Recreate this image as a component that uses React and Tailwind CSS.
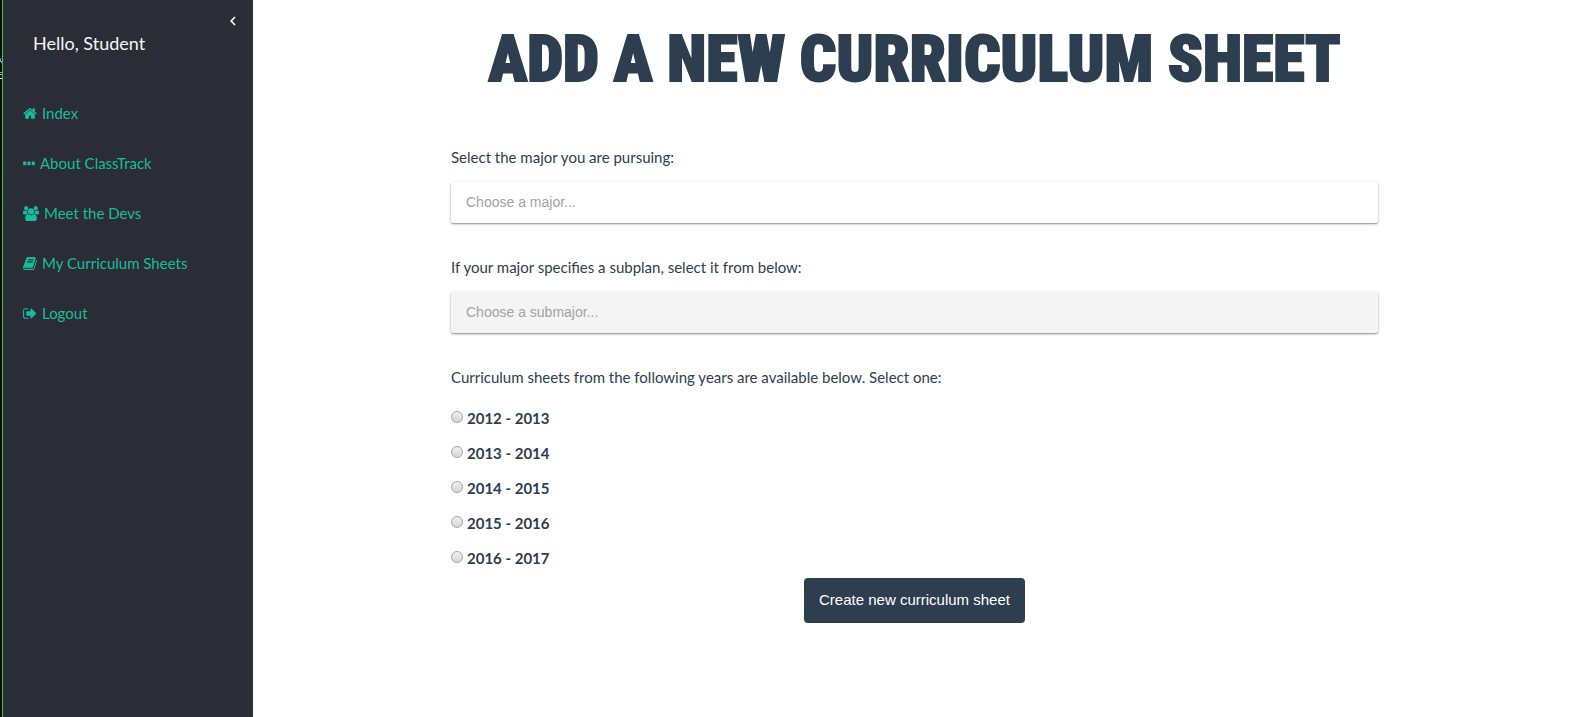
import React from "react";

const ICONS = {
  home: {
    box: "64 0 1664 1792",
    size: "w-[14px]",
    d: "M1472 992v480q0 26-19 45t-45 19h-384v-384h-256v384h-384q-26 0-45-19t-19-45v-480q0-1 .5-3t.5-3l575-474 575 474q1 2 1 6zm223-69l-62 74q-8 9-21 11h-3q-13 0-21-7l-692-577-692 577q-12 8-24 7-13-2-21-11l-62-74q-8-10-7-23.5t11-21.5l719-599q32-26 76-26t76 26l244 204v-195q0-14 9-23t23-9h192q14 0 23 9t9 23v408l219 182q10 8 11 21.5t-7 23.5z",
  },
  dots: {
    box: "0 0 1408 1792",
    size: "w-[12px]",
    d: "M384 750v240q0 50-28 78t-68 28h-192q-40 0-68-28t-28-78v-240q0-50 28-78t68-28h192q40 0 68 28t28 78zm512 0v240q0 50-28 78t-68 28h-192q-40 0-68-28t-28-78v-240q0-50 28-78t68-28h192q40 0 68 28t28 78zm512 0v240q0 50-28 78t-68 28h-192q-40 0-68-28t-28-78v-240q0-50 28-78t68-28h192q40 0 68 28t28 78z",
  },
  group: {
    box: "-64 0 1920 1792",
    size: "w-[16px]",
    d: "M529 896q-162 5-265 128h-134q-82 0-138-40.5t-56-118.5q0-353 124-353 6 0 43.5 21t97.5 42.5 119 21.5q67 0 133-23-5 37-5 66 0 139 81 256zm1071 637q0 120-73 189.5t-194 69.5h-874q-121 0-194-69.5t-73-189.5q0-53 3.5-103.5t14-109 26.5-108.5 43-97.5 62-81 85.5-53.5 111.5-20q10 0 43 21.5t73 48 107 48 135 21.5 135-21.5 107-48 73-48 43-21.5q61 0 111.5 20t85.5 53.5 62 81 43 97.5 26.5 108.5 14 109 3.5 103.5zm-1024-1277q0 106-75 181t-181 75-181-75-75-181 75-181 181-75 181 75 75 181zm704 384q0 159-112.5 271.5t-271.5 112.5-271.5-112.5-112.5-271.5 112.5-271.5 271.5-112.5 271.5 112.5 112.5 271.5zm576 225q0 78-56 118.5t-138 40.5h-134q-103-123-265-128 81-117 81-256 0-29-5-66 66 23 133 23 59 0 119-21.5t97.5-42.5 43.5-21q124 0 124 353zm-128-609q0 106-75 181t-181 75-181-75-75-181 75-181 181-75 181 75 75 181z",
  },
  book: {
    box: "64 0 1664 1792",
    size: "w-[14px]",
    d: "M1703 478q40 57 18 129l-275 906q-19 64-76.5 107.5t-122.5 43.5h-923q-77 0-148.5-53.5t-99.5-131.5q-24-67-2-127 0-4 3-27t4-37q1-8-3-21.5t-3-19.5q2-11 8-21t16.5-23.5 16.5-23.5q23-38 45-91.5t30-91.5q3-10 .5-30t-.5-28q3-11 17-28t17-23q21-36 42-92t25-90q1-9-2.5-32t.5-28q4-13 22-30.5t22-22.5q19-26 42.5-84.5t27.5-96.5q1-8-3-25.5t-2-26.5q2-8 9-18t18-23 17-21q8-12 16.5-30.5t15-35 16-36 19.5-32 26.5-23.5 36-11.5 47.5 5.5l-1 3q38-9 51-9h761q74 0 114 56t18 130l-274 906q-36 119-71.5 153.5t-128.5 34.5h-869q-27 0-38 15-11 16-1 43 24 70 144 70h923q29 0 56-15.5t35-41.5l300-987q7-22 5-57 38 15 59 43zm-1064 2q-4 13 2 22.5t20 9.5h608q13 0 25.5-9.5t16.5-22.5l21-64q4-13-2-22.5t-20-9.5h-608q-13 0-25.5 9.5t-16.5 22.5zm-83 256q-4 13 2 22.5t20 9.5h608q13 0 25.5-9.5t16.5-22.5l21-64q4-13-2-22.5t-20-9.5h-608q-13 0-25.5 9.5t-16.5 22.5z",
  },
  logout: {
    box: "64 0 1664 1792",
    size: "w-[14px]",
    d: "M704 1440q0 4 1 20t.5 26.5-3 23.5-10 19.5-20.5 6.5h-320q-119 0-203.5-84.5t-84.5-203.5v-704q0-119 84.5-203.5t203.5-84.5h320q13 0 22.5 9.5t9.5 22.5q0 4 1 20t.5 26.5-3 23.5-10 19.5-20.5 6.5h-320q-66 0-113 47t-47 113v704q0 66 47 113t113 47h312l11.5 1 11.5 3 8 5.5 7 9 2 13.5zm928-544q0 26-19 45l-544 544q-19 19-45 19t-45-19-19-45v-288h-448q-26 0-45-19t-19-45v-384q0-26 19-45t45-19h448v-288q0-26 19-45t45-19 45 19l544 544q19 19 19 45z",
  },
};

const LINKS = [
  { label: "Index", icon: "home" },
  { label: "About ClassTrack", icon: "dots" },
  { label: "Meet the Devs", icon: "group" },
  { label: "My Curriculum Sheets", icon: "book" },
  { label: "Logout", icon: "logout" },
];

const YEARS = ["2012 - 2013", "2013 - 2014", "2014 - 2015", "2015 - 2016", "2016 - 2017"];

function NavIcon({ name }) {
  const icon = ICONS[name];
  return (
    <svg viewBox={icon.box} className={`${icon.size} h-[15px] shrink-0`} fill="currentColor" aria-hidden="true">
      <path d={icon.d} />
    </svg>
  );
}

function Sidebar() {
  return (
    <aside className="flex shrink-0 bg-[#2b2d36]">
      <div className="w-[3px] border-r border-[#1fd655] bg-black">
        <svg viewBox="0 0 2 24" className="mt-[56px] h-[24px] w-[2px]" aria-hidden="true">
          <path d="M0 2h1v2h-1z" fill="#b5651d" />
          <path d="M0 4h1v1h1v2h-1v-1h-1z" fill="#5fa8e8" />
          <path d="M0 16h2v1h-2z" fill="#5fa8e8" />
          <path d="M0 18h2v1h-2z" fill="#c98a4a" />
          <path d="M0 22h2v1h-2z" fill="#fff" />
        </svg>
      </div>
      <div className="w-[250px]">
        <div className="flex items-start justify-between pr-4">
          <h2 className="mt-[30px] pl-[30px] text-[18px] leading-[27px] text-[#f5f5f5]">Hello, Student</h2>
          <button type="button" aria-label="Collapse menu" className="mt-[16px] text-white">
            <svg viewBox="0 0 8 10" className="h-[10px] w-[8px]" fill="none" stroke="currentColor" strokeWidth="1.7" aria-hidden="true">
              <path d="M6 1L2.2 5L6 9" />
            </svg>
          </button>
        </div>
        <nav className="mt-[31px]">
          <ul>
            {LINKS.map((link) => (
              <li key={link.label}>
                <a href="#" className="flex h-[50px] items-center gap-[5px] px-5 text-[15px] leading-[20px] text-[#18bc9c]">
                  <NavIcon name={link.icon} />
                  {link.label}
                </a>
              </li>
            ))}
          </ul>
        </nav>
      </div>
    </aside>
  );
}

function Field({ id, label, placeholder, disabled }) {
  return (
    <div className="mb-[34px]">
      <label htmlFor={id} className="mb-[15px] block leading-[20px]">
        {label}
      </label>
      <select
        id={id}
        disabled={disabled}
        defaultValue=""
        className="block h-[41px] w-full appearance-none rounded-[2px] bg-white px-[15px] font-['Liberation_Sans',sans-serif] text-[14px] text-[#a3a3a3] opacity-100 shadow-[0_1px_3px_rgba(0,0,0,0.3),0_1px_1px_rgba(0,0,0,0.2)] disabled:bg-[#f4f4f4]"
      >
        <option value="">{placeholder}</option>
      </select>
    </div>
  );
}

export default function App() {
  return (
    <div className="flex min-h-screen bg-white font-[Lato,sans-serif] text-[15px] text-[#2c3e50]">
      <Sidebar />
      <main className="min-w-0 flex-1">
        <div className="pr-[195px] pl-[15%]">
          <h1 className="flex justify-center pt-[24px] font-['Roboto_Condensed','Liberation_Sans',sans-serif] text-[64px] leading-[72px] font-black whitespace-nowrap uppercase [-webkit-text-stroke:2px_#2c3e50]">
            Add a new curriculum sheet
          </h1>
          <form className="mt-[51px]" onSubmit={(e) => e.preventDefault()}>
            <Field id="major" label="Select the major you are pursuing:" placeholder="Choose a major..." />
            <Field id="submajor" label="If your major specifies a subplan, select it from below:" placeholder="Choose a submajor..." disabled />
            <fieldset>
              <legend className="mb-[13px] leading-[20px]">
                Curriculum sheets from the following years are available below. Select one:
              </legend>
              {YEARS.map((year) => (
                <label key={year} className="flex h-[35px] items-center gap-[4px] leading-[20px] font-bold">
                  <input
                    type="radio"
                    name="year"
                    value={year}
                    className="mb-[2px] size-[12px] appearance-none rounded-full border border-[#a5a5a5] bg-linear-to-b from-[#f0f0f0] to-[#d6d6d6] checked:border-4 checked:border-[#2c3e50]"
                  />
                  {year}
                </label>
              ))}
            </fieldset>
            <div className="mt-[3px] flex justify-center">
              <button type="submit" className="h-[45px] rounded-[4px] bg-[#2c3e50] px-[15px] font-['Liberation_Sans',sans-serif] text-[15px] text-white">
                Create new curriculum sheet
              </button>
            </div>
          </form>
        </div>
      </main>
    </div>
  );
}
